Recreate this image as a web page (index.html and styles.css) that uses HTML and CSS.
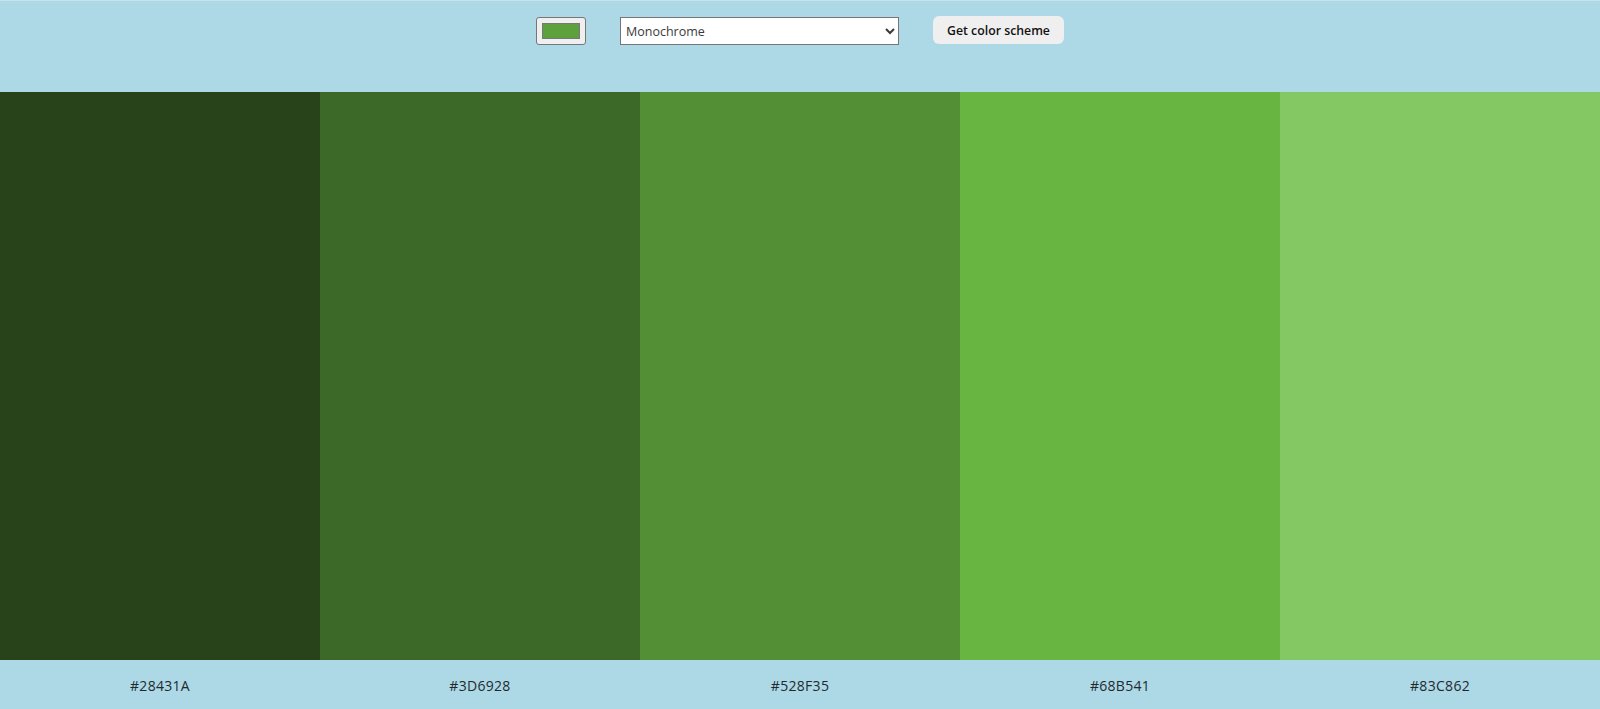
FILE: index.html
```html
<!DOCTYPE html>
<html lang="en">
<head>
<meta charset="utf-8">
<title>Color Scheme Generator</title>
<link rel="stylesheet" href="styles.css">
</head>
<body>
<header class="controls">
  <input class="seed" type="color" value="#5ca13c">
  <select class="mode">
    <option>Monochrome</option>
    <option>Monochrome-dark</option>
    <option>Monochrome-light</option>
    <option>Analogic</option>
    <option>Complement</option>
    <option>Analogic-complement</option>
    <option>Triad</option>
    <option>Quad</option>
  </select>
  <button class="get-btn" type="button">Get color scheme</button>
</header>
<main class="scheme">
  <div class="col"><div class="swatch" style="background:#28431A"></div><p class="hex">#28431A</p></div>
  <div class="col"><div class="swatch" style="background:#3D6928"></div><p class="hex">#3D6928</p></div>
  <div class="col"><div class="swatch" style="background:#528F35"></div><p class="hex">#528F35</p></div>
  <div class="col"><div class="swatch" style="background:#68B541"></div><p class="hex">#68B541</p></div>
  <div class="col"><div class="swatch" style="background:#83C862"></div><p class="hex">#83C862</p></div>
</main>
</body>
</html>
```
FILE: styles.css
```css
* { box-sizing: border-box; }
html, body { margin: 0; padding: 0; }
body {
  background: #add8e6;
  border-top: 1px solid #c6e3ec;
  font-family: "Open Sans", "Liberation Sans", sans-serif;
  color: #1f2a30;
  height: 709px;
  overflow: hidden;
}
.controls {
  height: 91px;
  display: flex;
  justify-content: center;
  align-items: flex-start;
  gap: 34px;
  padding-top: 16px;
}
.seed {
  width: 50px;
  height: 28px;
  padding: 1px 3px;
  border: 1px solid #767676;
  border-radius: 3px;
  background: #efefef;
  margin: 0;
}
.mode {
  width: 279px;
  height: 28px;
  margin: 0;
  padding: 0 1px;
  font-family: "Open Sans", "Liberation Sans", sans-serif;
  font-size: 12.5px;
  color: #3a3a3a;
  background: #fff;
  border: 1px solid #767676;
  border-radius: 0;
}
.get-btn {
  width: 131px;
  height: 28px;
  margin: -1px 0 0;
  border: none;
  border-radius: 6px;
  background: #efefef;
  font-family: "Open Sans", "Liberation Sans", sans-serif;
  font-weight: 600;
  font-size: 12.3px;
  color: #111;
  padding: 0;
}
.scheme {
  display: grid;
  grid-template-columns: repeat(5, 1fr);
}
.col { display: flex; flex-direction: column; }
.swatch { height: 568px; }
.hex {
  margin: 0;
  padding-top: 16px;
  line-height: 20px;
  text-align: center;
  font-size: 14px;
  letter-spacing: 0.3px;
  color: #1f2a30;
}
```
